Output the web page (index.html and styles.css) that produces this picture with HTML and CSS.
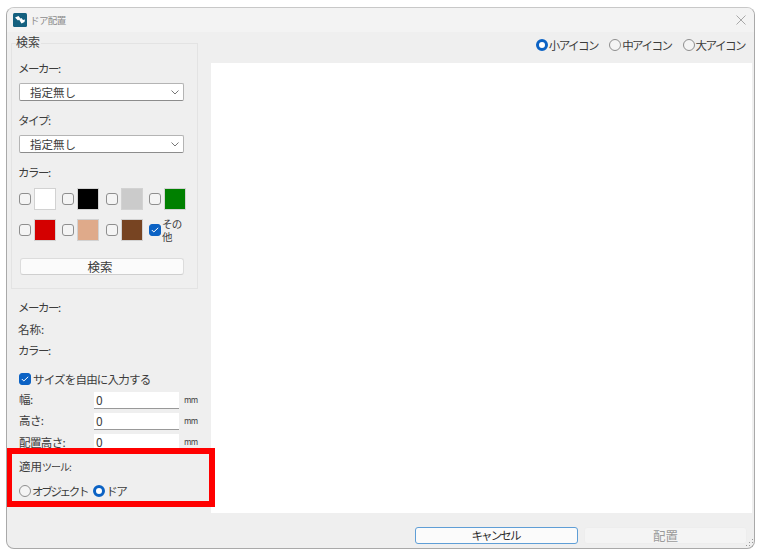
FILE: index.html
```html
<!DOCTYPE html>
<html lang="ja">
<head>
<meta charset="utf-8">
<title>ドア配置</title>
<link rel="stylesheet" href="styles.css">
</head>
<body>
<div class="window">
  <header class="titlebar">
    <svg class="app-icon" width="14" height="14" viewBox="0 0 14 14"><rect width="14" height="14" rx="1.5" fill="#14607f"/><path d="M2 4.5L5.5 3l2 2.5L5 7.5zM6 6.5l2.5-1.5 1.5 2 2-.5-.5 2.5-3 1.5z" fill="#fff"/></svg>
    <span class="title">ドア配置</span>
    <svg class="close" width="10" height="10" viewBox="0 0 10 10"><path d="M.5.5l9 9M9.5.5l-9 9" stroke="#a8a8a8" fill="none"/></svg>
  </header>
  <div class="main">
    <aside class="side">
      <section class="group">
        <div class="legend">検索</div>
        <div class="lbl first kana">メーカー:</div>
        <div class="combo">指定無し<svg width="8" height="5" viewBox="0 0 8 5"><path d="M.5.5L4 4 7.5.5" stroke="#777" fill="none"/></svg></div>
        <div class="lbl kana">タイプ:</div>
        <div class="combo">指定無し<svg width="8" height="5" viewBox="0 0 8 5"><path d="M.5.5L4 4 7.5.5" stroke="#777" fill="none"/></svg></div>
        <div class="lbl kana">カラー:</div>
        <div class="colors">
          <div class="color"><i class="chk"></i><b class="sw sw-white"></b></div>
          <div class="color"><i class="chk"></i><b class="sw sw-black"></b></div>
          <div class="color"><i class="chk"></i><b class="sw sw-gray"></b></div>
          <div class="color"><i class="chk"></i><b class="sw sw-green"></b></div>
          <div class="color"><i class="chk"></i><b class="sw sw-red"></b></div>
          <div class="color"><i class="chk"></i><b class="sw sw-tan"></b></div>
          <div class="color"><i class="chk"></i><b class="sw sw-brown"></b></div>
          <div class="color"><i class="chk on"><svg width="8" height="6" viewBox="0 0 8 6"><path d="M.8 3l2 2L7.2.8" stroke="#fff" fill="none"/></svg></i><span class="other">その他</span></div>
        </div>
        <div class="btn search">検索</div>
      </section>
      <div class="info kana">メーカー:</div>
      <div class="info">名称:</div>
      <div class="info kana">カラー:</div>
      <label class="free"><i class="chk on"><svg width="8" height="6" viewBox="0 0 8 6"><path d="M.8 3l2 2L7.2.8" stroke="#fff" fill="none"/></svg></i><span class="kana-s">サイズを自由に入力する</span></label>
      <div class="size"><span>幅:</span><div class="input">0</div><em>mm</em></div>
      <div class="size"><span>高さ:</span><div class="input">0</div><em>mm</em></div>
      <div class="size"><span>配置高さ:</span><div class="input">0</div><em>mm</em></div>
      <div class="tool-label">適用<span class="tiny">ツール:</span></div>
      <div class="tools">
        <span class="radio-item"><i class="radio"></i><span class="obj">オブジェクト</span></span>
        <span class="radio-item"><i class="radio on"></i><span class="kana">ドア</span></span>
      </div>
      <div class="highlight"></div>
    </aside>
    <div class="content">
      <div class="view">
        <span class="radio-item"><i class="radio on"></i><span class="kana">小アイコン</span></span>
        <span class="radio-item"><i class="radio"></i><span class="kana">中アイコン</span></span>
        <span class="radio-item"><i class="radio"></i><span class="kana">大アイコン</span></span>
      </div>
      <div class="list"></div>
    </div>
  </div>
  <footer class="footer">
    <div class="btn cancel">キャンセル</div>
    <div class="btn place">配置</div>
    <svg class="grip" width="10" height="10" viewBox="0 0 10 10"><path d="M8 1h1v1H8zM5 4h1v1H5zM8 4h1v1H8zM2 7h1v1H2zM5 7h1v1H5zM8 7h1v1H8z" fill="#999"/></svg>
  </footer>
</div>
</body>
</html>
```

FILE: styles.css
```css
* { box-sizing: border-box; }
html, body { margin: 0; padding: 0; background: #fff; }
body {
  width: 760px;
  height: 555px;
  overflow: hidden;
  padding: 7px 5px 6px 6px;
  font-family: "Noto Sans CJK JP", "Noto Sans", sans-serif;
  font-size: 11.5px;
  color: #3c3c3c;
}
i, em, b { font-style: normal; font-weight: normal; display: block; }
.window {
  width: 749px;
  height: 542px;
  background: #efefef;
  border: 1px solid #a9a9a9;
  border-top-color: #c8c8c8;
  border-radius: 8px;
  display: flex;
  flex-direction: column;
  overflow: hidden;
}
.titlebar {
  height: 24px;
  flex: none;
  background: #f3f3f3;
  display: flex;
  align-items: center;
  padding: 0 8px 0 6px;
}
.app-icon { flex: none; }
.title { margin-left: 3px; color: #8c8c8c; font-size: 9.5px; letter-spacing: -.6px; }
.close { margin-left: auto; }

.main { display: flex; flex: none; height: 481px; }
.side { width: 204px; flex: none; position: relative; padding: 11px 0 0 4px; }
.group {
  position: relative;
  width: 187px;
  height: 246px;
  border: 1px solid #e3e3e3;
  padding: 0 0 0 7px;
}
.legend {
  position: absolute;
  left: 4px;
  top: -10px;
  font-size: 12px;
  line-height: 16px;
  background: #efefef;
  padding-right: 1px;
}
.lbl { height: 18px; line-height: 18px; margin-top: 10px; margin-left: -1px; }
.lbl.first { margin-top: 15px; }
.kana { letter-spacing: -1.5px; }
.obj { letter-spacing: -2.3px; }
.combo {
  width: 165px;
  height: 18px;
  margin-top: 6px;
  background: #fff;
  border: 1px solid #b4b4b4;
  border-bottom-color: #8c8c8c;
  border-radius: 2px;
  padding-left: 10px;
  line-height: 16px;
  display: flex;
  align-items: center;
  justify-content: space-between;
  padding-right: 4px;
}
.colors {
  display: grid;
  grid-template-columns: repeat(4, 43.3px);
  grid-auto-rows: 22px;
  row-gap: 9px;
  margin-top: 7px;
}
.color { display: flex; align-items: center; gap: 3px; }
.chk {
  width: 12px;
  height: 12px;
  flex: none;
  background: #f4f4f4;
  border: 1px solid #8e8e8e;
  border-radius: 3px;
  display: flex;
  align-items: center;
  justify-content: center;
}
.chk.on { background: #0b62c4; border-color: #0b62c4; }
.sw { width: 22px; height: 22px; border: 1px solid #d2d2d2; }
.sw-white { background: #fff; }
.sw-black { background: #000; }
.sw-gray { background: #cbcbcb; }
.sw-green { background: #008000; }
.sw-red { background: #d40000; }
.sw-tan { background: #dfaa8a; }
.sw-brown { background: #774422; }
.other { width: 23px; margin-left: -2px; font-size: 10.5px; line-height: 13px; letter-spacing: -.6px; }
.btn {
  background: #fbfbfb;
  border: 1px solid #dcdcdc;
  border-bottom-color: #cfcfcf;
  border-radius: 3px;
  text-align: center;
  height: 17px;
  line-height: 15px;
  font-size: 11.5px;
}
.search { width: 164px; margin: 17px 0 0 1px; padding-right: 4px; font-size: 12.5px; }

.info { margin-left: 7px; height: 21.5px; line-height: 21.5px; }
.group + .info { margin-top: 8px; }
.free { display: flex; align-items: center; gap: 2px; margin: 7px 0 0 8px; height: 20px; }
.kana-s { letter-spacing: -.8px; }
.size {
  display: flex;
  align-items: center;
  margin-left: 8px;
  height: 21.3px;
}
.size span { width: 75px; flex: none; letter-spacing: -.6px; }
.input {
  width: 85px;
  height: 17px;
  margin-top: 2px;
  flex: none;
  background: #fff;
  border-bottom: 1px solid #999;
  padding-left: 2px;
  line-height: 16px;
  font-size: 12px;
}
.size em { margin-left: 5px; font-size: 8px; letter-spacing: -.6px; }
.tool-label { margin: 5px 0 0 8px; height: 18px; line-height: 18px; }
.tiny { font-size: 10px; letter-spacing: -1px; }
.tools { display: flex; gap: 6px; margin: 7px 0 0 8px; height: 18px; align-items: center; }
.radio-item { display: inline-flex; align-items: center; gap: 1px; }
.radio {
  width: 12px;
  height: 12px;
  flex: none;
  border-radius: 50%;
  background: #f4f4f4;
  border: 1px solid #8e8e8e;
}
.radio.on { background: #fff; border: 3.5px solid #0b62c4; }
.highlight {
  position: absolute;
  left: -1px;
  top: 416px;
  width: 209px;
  height: 59px;
  border: 6px solid #f00;
  pointer-events: none;
}

.content { flex: 1; display: flex; flex-direction: column; min-width: 0; }
.view {
  height: 31px;
  flex: none;
  display: flex;
  justify-content: flex-end;
  align-items: center;
  gap: 11px;
  padding: 0 9px 5px 0;
}
.list { width: 541px; height: 450px; background: #fff; }
.footer {
  flex: 1;
  display: flex;
  position: relative;
  padding: 14px 0 0 408px;
  gap: 6px;
}
.footer .btn { width: 163px; height: 17px; }
.footer .cancel { border: 1px solid #5f9ed6; border-radius: 3px; color: #2c2c2c; letter-spacing: -1.9px; padding-right: 2px; }
.footer .place { background: #f4f4f4; border-color: #ededed; color: #9a9a9a; font-size: 12.5px; }
.grip { position: absolute; right: 0; bottom: 0; }
```
